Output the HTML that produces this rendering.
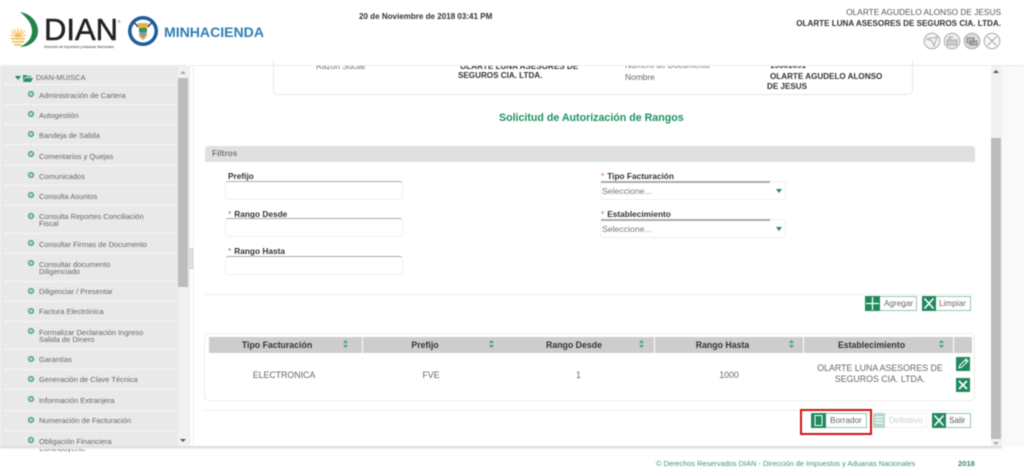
<!DOCTYPE html>
<html lang="es">
<head>
<meta charset="utf-8">
<title>DIAN</title>
<style>
html,body{margin:0;padding:0;width:1024px;height:473px;overflow:hidden;background:#fff}
body{position:relative;font-family:"Liberation Sans",Arial,sans-serif;color:#333}
#w{position:absolute;left:0;top:0;width:1024px;height:473px;overflow:hidden;filter:blur(.4px)}
.a{position:absolute;white-space:nowrap}
.b{font-weight:bold}
.mi{position:absolute;left:39px;font-size:7.5px;line-height:7.3px;color:#666;white-space:nowrap}
.dot{position:absolute;left:28px;width:6px;height:6px;border-radius:50%;background:#a9d3c1;border:1.6px solid #2a9167;box-sizing:border-box}
.sep{position:absolute;left:4px;width:173px;height:1px;background:#f6f6f6}
.lab{position:absolute;font-size:8.3px;font-weight:bold;color:#333;white-space:nowrap}
.lab i{font-style:normal;color:#d9534f;font-weight:normal;margin-right:3px}
.inp{position:absolute;width:178px;height:19px;box-sizing:border-box;border:1px solid #eee;border-top:1.5px solid #aaa;border-radius:3px;background:#fff}
.sel{position:absolute;left:600px;width:186px;height:19px;box-sizing:border-box;border:1px solid #f0f0f0;border-radius:3px;background:#fff}
.sel:before{content:"";position:absolute;left:0;top:-1px;width:169px;height:1.5px;background:#aaa}
.sel span{position:absolute;left:1px;top:4px;font-size:8.7px;color:#777}
.sel b{position:absolute;left:175px;top:7px;width:0;height:0;border:3px solid transparent;border-top:4px solid #1f8a5c;border-bottom:0}
.th{position:absolute;top:337px;height:16px;background:#cdcdcd;font-size:8.75px;font-weight:bold;line-height:16px;color:#333;text-align:center;box-sizing:border-box}
.sort{position:absolute;top:3px;width:5px;height:8px}
.td{position:absolute;font-size:8.8px;color:#666;text-align:center;line-height:10.5px}
.btn{position:absolute;height:15px;box-sizing:border-box;border:1px solid #8fc9b0;background:#fff;font-size:8.2px;color:#666;line-height:13px}
</style>
</head>
<body>
<div id="w">

<!-- DIAN logo -->
<svg class="a" style="left:8px;top:10px" width="265" height="42" viewBox="0 0 265 42">
  <path d="M12 2 C24 4 30 13 30 21 C30 30 22 37 12 37 C20 33 24 28 24 21 C24 13 18 7 12 2Z" fill="#23814a"/>
  <g stroke="#f2b84b" stroke-width="1.1" fill="none">
    <path d="M10 27 L2 25M10 27 L3 21M10 27 L6 19M10 27 L10 18M10 27 L14 19M10 27 L17 21M10 27 L18 25"/>
  </g>
  <path d="M3 28h14v1.500H3zM4 31h12v1.500H4zM6 34h8v1.500H6z" fill="#f2b84b"/>
  <text x="36" y="30" font-family="Liberation Sans,sans-serif" font-size="31" fill="#222" stroke="#222" stroke-width=".5" textLength="74" lengthAdjust="spacingAndGlyphs">DIAN</text>
  <text x="110" y="13" font-family="Liberation Sans,sans-serif" font-size="3.5" fill="#333">®</text>
  <text x="36" y="38" font-family="Liberation Sans,sans-serif" font-size="3.6" fill="#333" textLength="70" lengthAdjust="spacingAndGlyphs">Dirección de Impuestos y Aduanas Nacionales</text>
  <circle cx="135" cy="21" r="15" fill="#1c5da0"/>
  <circle cx="135" cy="21" r="11.5" fill="#fff"/>
  <path d="M130 13h10v3l-1 1v7c0 3-2 5-4 6c-2-1-4-3-4-6v-7l-1-1z" fill="#d9b64a"/>
  <path d="M131 18h8v4h-8z" fill="#3f8d5a"/>
  <path d="M132 22h6v3l-3 3-3-3z" fill="#7f9ab0"/>
  <path d="M126 13c2 1 3 2 4 4M144 13c-2 1-3 2-4 4" stroke="#444" stroke-width="1.4" fill="none"/>
  <text x="156" y="27" font-family="Liberation Sans,sans-serif" font-size="13.5" font-weight="bold" fill="#2d7fb5" textLength="100" lengthAdjust="spacingAndGlyphs">MINHACIENDA</text>
</svg>

<div class="a b" style="left:359px;top:12px;font-size:8.05px;color:#333">20 de Noviembre de 2018 03:41 PM</div>
<div class="a" style="right:23px;top:7px;font-size:8.3px;color:#555">OLARTE AGUDELO ALONSO DE JESUS</div>
<div class="a b" style="right:23px;top:19px;font-size:8.1px;color:#333">OLARTE LUNA ASESORES DE SEGUROS CIA. LTDA.</div>

<!-- top icons -->
<svg class="a" style="left:922px;top:31px" width="80" height="20" viewBox="0 0 80 20" fill="none" stroke="#aaa">
  <circle cx="10" cy="10" r="7.800" fill="#f4f4f4"/>
  <path d="M5 8l10-2-3 9-2-5z"/>
  <circle cx="30" cy="10" r="7.800" fill="#eee"/>
  <path d="M25 9h10v5H25zM27 9V6h4" fill="#ccc"/>
  <circle cx="50" cy="10" r="7.800" fill="#ddd"/>
  <path d="M45 7h7v5h-7zM48 10h7v4h-7z" fill="#bbb" stroke="#888"/>
  <circle cx="70" cy="10" r="7.800" fill="#f8f8f8"/>
  <path d="M65.500 5.500l9 9M74.500 5.500l-9 9"/>
</svg>

<!-- Sidebar -->
<div class="a" style="left:0;top:66px;width:189px;height:381px;background:#e9e9e9;border-radius:3px;box-shadow:0 0 2px #ccc;overflow:hidden">
  <div style="position:absolute;left:178px;top:0;width:11px;height:381px;background:#f1f1f1"></div>
  <div style="position:absolute;left:178px;top:12px;width:10px;height:209px;background:#bcbcbc"></div>
  <div style="position:absolute;left:180px;top:5px;border:3px solid transparent;border-bottom:3px solid #aaa;border-top:0"></div>
  <div style="position:absolute;left:180px;top:373px;border:3px solid transparent;border-top:3px solid #555;border-bottom:0"></div>
</div>
<div class="a" style="left:0;top:66px;width:178px;height:386px;overflow:hidden">
  <div style="position:absolute;left:15px;top:10px;border:3px solid transparent;border-top:4px solid #1f8a5c;border-bottom:0"></div>
  <svg style="position:absolute;left:23px;top:8px" width="10" height="8" viewBox="0 0 10 8"><path d="M0 1h3l1 1h4v1H2L0 7zM2 4h8L8 8H0z" fill="#2a9167"/></svg>
  <div class="mi" style="left:36px;top:8px">DIAN-MUISCA</div>
  <div class="sep" style="top:18px"></div>

  <div class="dot" style="top:25px"></div><div class="mi" style="top:26px">Administración de Cartera</div><div class="sep" style="top:38px"></div>
  <div class="dot" style="top:45px"></div><div class="mi" style="top:46px">Autogestión</div><div class="sep" style="top:58px"></div>
  <div class="dot" style="top:65px"></div><div class="mi" style="top:66px">Bandeja de Salida</div><div class="sep" style="top:78px"></div>
  <div class="dot" style="top:85px"></div><div class="mi" style="top:87px">Comentarios y Quejas</div><div class="sep" style="top:99px"></div>
  <div class="dot" style="top:106px"></div><div class="mi" style="top:107px">Comunicados</div><div class="sep" style="top:119px"></div>
  <div class="dot" style="top:126px"></div><div class="mi" style="top:127px">Consulta Asuntos</div><div class="sep" style="top:139px"></div>
  <div class="dot" style="top:147px"></div><div class="mi" style="top:147px">Consulta Reportes Conciliación<br>Fiscal</div><div class="sep" style="top:167px"></div>
  <div class="dot" style="top:174px"></div><div class="mi" style="top:175px">Consultar Firmas de Documento</div><div class="sep" style="top:187px"></div>
  <div class="dot" style="top:194px"></div><div class="mi" style="top:195px">Consultar documento<br>Diligenciado</div><div class="sep" style="top:215px"></div>
  <div class="dot" style="top:222px"></div><div class="mi" style="top:222px">Diligenciar / Presentar</div><div class="sep" style="top:235px"></div>
  <div class="dot" style="top:242px"></div><div class="mi" style="top:242px">Factura Electrónica</div><div class="sep" style="top:255px"></div>
  <div class="dot" style="top:262px"></div><div class="mi" style="top:263px">Formalizar Declaración Ingreso<br>Salida de Dinero</div><div class="sep" style="top:283px"></div>
  <div class="dot" style="top:290px"></div><div class="mi" style="top:290px">Garantías</div><div class="sep" style="top:303px"></div>
  <div class="dot" style="top:310px"></div><div class="mi" style="top:310px">Generación de Clave Técnica</div><div class="sep" style="top:323px"></div>
  <div class="dot" style="top:330px"></div><div class="mi" style="top:331px">Información Extranjera</div><div class="sep" style="top:344px"></div>
  <div class="dot" style="top:351px"></div><div class="mi" style="top:351px">Numeración de Facturación</div><div class="sep" style="top:364px"></div>
  <div class="dot" style="top:371px"></div><div class="mi" style="top:372px">Obligación Financiera<br>Contribuyente</div>
</div>

<!-- splitter handle -->
<div class="a" style="left:189px;top:248px;width:4px;height:21px;background:#dfe6ee;border:1px solid #c4ced8;box-sizing:border-box"></div>

<!-- Main area -->
<div class="a" style="left:189px;top:65px;width:835px;height:1px;background:#ececec"></div>
<div class="a" style="left:193px;top:66px;width:1px;height:381px;background:#ececec"></div>
<div class="a" style="left:1002px;top:66px;width:22px;height:381px;background:#f9f9f9"></div>
<div class="a" style="left:991px;top:66px;width:11px;height:381px;background:#f1f1f1"></div>
<div class="a" style="left:991px;top:138px;width:10px;height:301px;background:#bcbcbc"></div>
<div class="a" style="left:993px;top:70px;border:3px solid transparent;border-bottom:3px solid #555;border-top:0"></div>
<div class="a" style="left:993px;top:442px;border:3px solid transparent;border-top:3px solid #aaa;border-bottom:0"></div>
<div class="a" style="left:0;top:446px;width:1002px;height:2px;background:#dedede"></div>
<div class="a" style="left:0;top:448px;width:1002px;height:1px;background:#f0f0f0"></div>

<!-- info box -->
<div class="a" style="left:273px;top:60px;width:640px;height:35px;border:1px solid #e8e8e8;border-top:0;border-radius:0 0 5px 5px;box-sizing:border-box"></div>
<div class="a" style="left:194px;top:66px;width:797px;height:30px;overflow:hidden">
  <div class="a" style="left:122px;top:-5px;font-size:8.3px;color:#666">Razón Social</div>
  <div class="a b" style="left:266px;top:-4px;font-size:8.1px;color:#333">OLARTE LUNA ASESORES DE</div>
  <div class="a b" style="left:264px;top:5px;font-size:8.1px;color:#333">SEGUROS CIA. LTDA.</div>
  <div class="a" style="left:431px;top:-5px;font-size:8.2px;color:#666">Número de Documento</div>
  <div class="a" style="left:431px;top:6px;font-size:8.400px;color:#666">Nombre</div>
  <div class="a b" style="left:576px;top:-5px;font-size:8.1px;color:#333">19361091</div>
  <div class="a b" style="left:576px;top:6px;font-size:8.1px;color:#333">OLARTE AGUDELO ALONSO</div>
  <div class="a b" style="left:573px;top:16px;font-size:8.1px;color:#333">DE JESUS</div>
</div>

<div class="a b" style="left:499px;top:112px;font-size:10.65px;color:#1f9160">Solicitud de Autorización de Rangos</div>

<!-- Filtros -->
<div class="a" style="left:205px;top:146px;width:770px;height:16px;background:#e0e0e0;border-radius:3px 3px 0 0;font-size:8.3px;line-height:15px;color:#777;font-weight:bold;text-indent:7px">Filtros</div>

<div class="lab" style="left:228px;top:171px">Prefijo</div>
<div class="inp" style="left:225px;top:181px"></div>
<div class="lab" style="left:228px;top:209px"><i>*</i>Rango Desde</div>
<div class="inp" style="left:225px;top:218px"></div>
<div class="lab" style="left:228px;top:246px"><i>*</i>Rango Hasta</div>
<div class="inp" style="left:225px;top:256px"></div>

<div class="lab" style="left:601px;top:171px"><i>*</i>Tipo Facturación</div>
<div class="sel" style="top:181px"><span>Seleccione...</span><b></b></div>
<div class="lab" style="left:601px;top:209px"><i>*</i>Establecimiento</div>
<div class="sel" style="top:219px"><span>Seleccione...</span><b></b></div>

<div class="a" style="left:205px;top:294px;width:770px;height:1px;background:#efefef"></div>

<!-- Agregar / Limpiar -->
<div class="btn" style="left:865px;top:296px;width:52px;padding-left:18px">Agregar</div>
<svg class="a" style="left:865px;top:296px" width="15" height="15" viewBox="0 0 15 15"><rect width="15" height="15" fill="#1f8a5c"/><path d="M7.500 1v13M1 7.500h13" stroke="#fff" stroke-width="1.300"/></svg>
<div class="btn" style="left:922px;top:296px;width:49px;padding-left:16px">Limpiar</div>
<svg class="a" style="left:922px;top:296px" width="14" height="15" viewBox="0 0 14 15"><rect width="14" height="15" fill="#1f8a5c"/><path d="M2.500 2.500l9 10M11.500 2.500l-9 10" stroke="#fff" stroke-width="1.600"/></svg>

<!-- table -->
<div class="a" style="left:204px;top:333px;width:771px;height:68px;border:1px solid #ececec;border-radius:5px;box-sizing:border-box"></div>
<div class="th" style="left:209px;width:153px;padding-right:17px">Tipo Facturación<svg class="sort" style="left:134px" viewBox="0 0 5 8"><path d="M2.500 0L5 3H0zM2.500 8L5 5H0z" fill="#3aa57a"/></svg></div>
<div class="th" style="left:363px;width:147px;padding-right:23px">Prefijo<svg class="sort" style="left:126px" viewBox="0 0 5 8"><path d="M2.500 0L5 3H0zM2.500 8L5 5H0z" fill="#3aa57a"/></svg></div>
<div class="th" style="left:506px;width:148px;padding-right:12px">Rango Desde<svg class="sort" style="left:133px" viewBox="0 0 5 8"><path d="M2.500 0L5 3H0zM2.500 8L5 5H0z" fill="#3aa57a"/></svg></div>
<div class="th" style="left:655px;width:148px;padding-right:13px">Rango Hasta<svg class="sort" style="left:134px" viewBox="0 0 5 8"><path d="M2.500 0L5 3H0zM2.500 8L5 5H0z" fill="#3aa57a"/></svg></div>
<div class="th" style="left:804px;width:149px;padding-right:14px">Establecimiento<svg class="sort" style="left:135px" viewBox="0 0 5 8"><path d="M2.500 0L5 3H0zM2.500 8L5 5H0z" fill="#3aa57a"/></svg></div>
<div class="th" style="left:954px;width:18px"></div>

<div class="td" style="left:209px;width:150px;top:370px">ELECTRONICA</div>
<div class="td" style="left:363px;width:136px;top:370px">FVE</div>
<div class="td" style="left:506px;width:145px;top:370px">1</div>
<div class="td" style="left:655px;width:148px;top:370px">1000</div>
<div class="td" style="left:804px;width:152px;top:363px">OLARTE LUNA ASESORES DE<br>SEGUROS CIA. LTDA.</div>

<svg class="a" style="left:956px;top:357px" width="14" height="14" viewBox="0 0 14 14"><rect width="14" height="14" fill="#1f8a5c"/><path d="M3 11l1-3 6-6 2 2-6 6zM9 3l2 2" stroke="#fff" fill="none"/></svg>
<svg class="a" style="left:956px;top:378px" width="14" height="14" viewBox="0 0 14 14"><rect width="14" height="14" fill="#1f8a5c"/><path d="M3 3l8 8M11 3l-8 8" stroke="#fff" stroke-width="1.700"/></svg>

<div class="a" style="left:204px;top:410px;width:771px;height:1px;background:#efefef"></div>

<!-- bottom buttons -->
<div class="a" style="left:800px;top:409px;width:72px;height:26px;border:2.500px solid #d01616;box-sizing:border-box"></div>
<div class="btn" style="left:811px;top:413px;width:56px;padding-left:18px">Borrador</div>
<svg class="a" style="left:811px;top:413px" width="15" height="15" viewBox="0 0 15 15"><rect width="15" height="15" fill="#1f8a5c"/><path d="M4 2.500h7v10H4z" stroke="#fff" fill="none"/></svg>
<div class="btn" style="left:873px;top:413px;width:54px;padding-left:15px;border-color:#f0f0f0;color:#c8d0cc">Definitivo</div>
<svg class="a" style="left:873px;top:413px" width="12" height="15" viewBox="0 0 12 15"><rect width="12" height="15" fill="#b6d8c8"/><path d="M2 4h8M2 7h8M2 10h8" stroke="#fff"/></svg>
<div class="btn" style="left:932px;top:413px;width:39px;padding-left:16px;color:#555">Salir</div>
<svg class="a" style="left:932px;top:413px" width="14" height="15" viewBox="0 0 14 15"><rect width="14" height="15" fill="#1f8a5c"/><path d="M2.500 2.500l9 10M11.500 2.500l-9 10" stroke="#fff" stroke-width="1.600"/></svg>

<!-- Footer -->
<div class="a" style="left:656px;top:459px;font-size:7.400px;color:#3a9a74">© Derechos Reservados DIAN - Dirección de Impuestos y Aduanas Nacionales</div>
<div class="a b" style="left:958px;top:459px;font-size:7.600px;color:#3a8a68">2018</div>

</div>
</body>
</html>
